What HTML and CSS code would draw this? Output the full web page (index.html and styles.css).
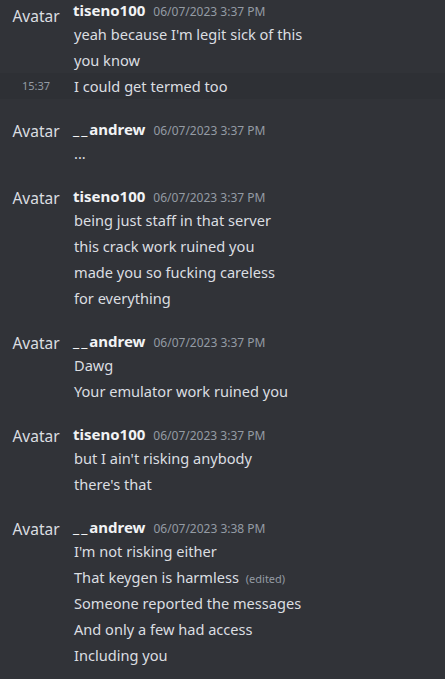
FILE: index.html
```html
<!DOCTYPE html>
<html lang="en">
<head>
    <meta charset="UTF-8">
    <meta name="viewport" content="width=device-width, initial-scale=1.0">
    <title>Chat log</title>
    <link rel="stylesheet" href="styles.css">
</head>
<body>
    <div class="chat">
        <div class="group first">
            <div class="avatar">Avatar</div>
            <div class="header"><span class="author">tiseno100</span><span class="stamp">06/07/2023 3:37 PM</span></div>
            <div class="line">yeah because I'm legit sick of this</div>
            <div class="line">you know</div>
            <div class="line hover"><span class="time">15:37</span>I could get termed too</div>
        </div>

        <div class="group">
            <div class="avatar">Avatar</div>
            <div class="header"><span class="author"><span class="under">__</span>andrew</span><span class="stamp">06/07/2023 3:37 PM</span></div>
            <div class="line">...</div>
        </div>

        <div class="group">
            <div class="avatar">Avatar</div>
            <div class="header"><span class="author">tiseno100</span><span class="stamp">06/07/2023 3:37 PM</span></div>
            <div class="line">being just staff in that server</div>
            <div class="line">this crack work ruined you</div>
            <div class="line">made you so fucking careless</div>
            <div class="line">for everything</div>
        </div>

        <div class="group">
            <div class="avatar">Avatar</div>
            <div class="header"><span class="author"><span class="under">__</span>andrew</span><span class="stamp">06/07/2023 3:37 PM</span></div>
            <div class="line">Dawg</div>
            <div class="line">Your emulator work ruined you</div>
        </div>

        <div class="group">
            <div class="avatar">Avatar</div>
            <div class="header"><span class="author">tiseno100</span><span class="stamp">06/07/2023 3:37 PM</span></div>
            <div class="line">but I ain't risking anybody</div>
            <div class="line">there's that</div>
        </div>

        <div class="group">
            <div class="avatar">Avatar</div>
            <div class="header"><span class="author"><span class="under">__</span>andrew</span><span class="stamp">06/07/2023 3:38 PM</span></div>
            <div class="line">I'm not risking either</div>
            <div class="line">That keygen is harmless <span class="edited">(edited)</span></div>
            <div class="line">Someone reported the messages</div>
            <div class="line">And only a few had access</div>
            <div class="line">Including you</div>
        </div>
    </div>
</body>
</html>
```

FILE: styles.css
```css
:root {
    --bg: #313338;
    --hover: #2e3035;
    --text: #dbdee1;
    --name: #f2f3f5;
    --muted: #949ba4;
}
html, body {
    margin: 0;
    padding: 0;
    background-color: var(--bg);
}
body {
    font-family: 'Noto Sans', 'Open Sans', sans-serif;
    color: var(--text);
    font-size: 14.6px;
    overflow: hidden;
}
.chat {
    display: flex;
    flex-direction: column;
}
.group {
    position: relative;
    margin-top: 20px;
}
.group.first {
    margin-top: 0;
}
.avatar {
    position: absolute;
    left: 0;
    top: 1px;
    width: 72px;
    text-align: center;
    font-size: 15.5px;
    line-height: 22px;
    color: var(--text);
}
.group.first .avatar {
    top: 5px;
}
.header {
    height: 21px;
    line-height: 21px;
    padding-left: 73px;
    white-space: nowrap;
}
.author {
    font-weight: bold;
    font-size: 15px;
    color: var(--name);
    margin-right: 8px;
}
.under {
    letter-spacing: 2px;
}
.stamp {
    font-size: 12px;
    color: var(--muted);
}
.line {
    position: relative;
    height: 26px;
    line-height: 26px;
    padding-left: 74px;
    white-space: nowrap;
}
.line.hover {
    background-color: var(--hover);
}
.time {
    position: absolute;
    left: 0;
    width: 72px;
    text-align: center;
    font-size: 11px;
    color: var(--muted);
}
.edited {
    font-size: 11px;
    color: var(--muted);
    margin-left: 3px;
}
```
